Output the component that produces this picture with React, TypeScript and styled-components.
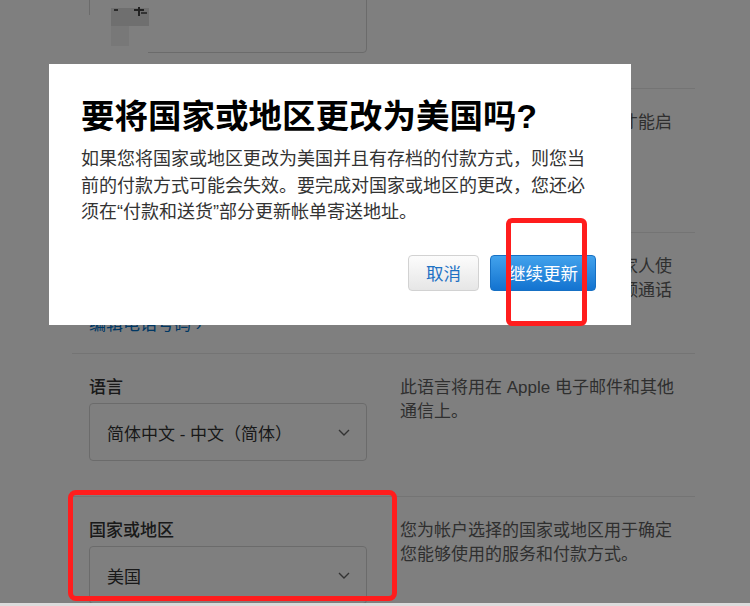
import React from 'react'
import styled, { createGlobalStyle } from 'styled-components'

const GlobalStyle = createGlobalStyle`
  html, body {
    margin: 0;
    padding: 0;
    background: #fff;
  }
  body {
    font-family: "Liberation Sans", "Noto Sans CJK SC", sans-serif;
  }
  * {
    box-sizing: border-box;
  }
`

const StyledScreen = styled.div`
  width: 750px;
  height: 606px;
  display: flex;
  flex-direction: column;
  overflow: hidden;
`

const StyledViewport = styled.div`
  position: relative;
  flex: 1;
  overflow: hidden;
  background: #fff;
`

const StyledBottomEdge = styled.div`
  height: 3px;
  background: #dcdcdc;
`

/* page is scrolled, first row starts above the top edge */
const StyledSettings = styled.div`
  width: 623px;
  margin: -55px 0 0 72px;
`

const StyledRow = styled.section<{ $height: number }>`
  position: relative;
  display: flex;
  gap: 33px;
  height: ${({ $height }) => $height}px;
  padding: 22px 0 0 17px;
  border-top: 1px solid #e8e8e8;

  &:first-child {
    border-top: 1px solid transparent;
  }
`

const StyledField = styled.div`
  flex: 0 0 278px;
  display: flex;
  flex-direction: column;
  gap: 4px;
`

const StyledLabel = styled.label`
  font-size: 17px;
  line-height: 24px;
  font-weight: 500;
  color: #333;
`

const StyledValue = styled.div`
  font-size: 17px;
  line-height: 24px;
  color: #333;
`

const StyledLink = styled.a`
  margin-top: 2px;
  font-size: 17px;
  line-height: 24px;
  color: #0070c9;
  text-decoration: none;
`

const StyledSelect = styled.div`
  position: relative;
  margin-top: -1px;
  height: 58px;
  display: flex;
  align-items: center;
  justify-content: space-between;
  padding: 0 16px 0 17px;
  border: 1px solid #d6d6d6;
  border-radius: 4px;
  background: #fff;
  font-size: 17px;
  color: #333;
`

const StyledMosaic = styled.svg`
  position: absolute;
  left: -2px;
  top: 11px;
`

const StyledDescription = styled.p`
  flex: 0 0 285px;
  margin: 0;
  font-size: 17px;
  line-height: 24px;
  color: #5e5e5e;
`

const StyledOverlay = styled.div`
  position: absolute;
  inset: 0;
  background: rgba(0, 0, 0, 0.5);
`

const StyledDialog = styled.div`
  position: absolute;
  left: 49px;
  top: 64px;
  width: 582px;
  height: 261px;
  display: flex;
  flex-direction: column;
  padding: 31px 35px 0 32px;
  background: #fff;
`

const StyledTitle = styled.h1`
  margin: 0;
  font-size: 33.5px;
  line-height: 43px;
  font-weight: 700;
  color: #000;
  white-space: nowrap;
`

const StyledMessage = styled.p`
  width: 510px;
  margin: 8px 0 0;
  font-size: 18px;
  line-height: 26.5px;
  color: #333;
`

const StyledActions = styled.div`
  display: flex;
  justify-content: flex-end;
  gap: 11px;
  margin-top: 29px;
`

const StyledButton = styled.button<{ $primary?: boolean }>`
  height: 36px;
  padding: 0 17px;
  border-radius: 4px;
  font-family: inherit;
  font-size: 17.5px;
  cursor: pointer;
  border: 1px solid ${({ $primary }) => ($primary ? '#1670c4' : '#d2d2d2')};
  color: ${({ $primary }) => ($primary ? '#fff' : '#1f72c4')};
  background: ${({ $primary }) =>
    $primary ? 'linear-gradient(#42a2ec, #1373d0)' : 'linear-gradient(#fcfcfc, #e6e6e6)'};
`

const StyledMark = styled.div<{ $left: number; $top: number; $width: number; $height: number; $radius: number }>`
  position: absolute;
  left: ${({ $left }) => $left}px;
  top: ${({ $top }) => $top}px;
  width: ${({ $width }) => $width}px;
  height: ${({ $height }) => $height}px;
  border: 5px solid #ff1d1d;
  border-radius: ${({ $radius }) => $radius}px;
  pointer-events: none;
`

function Chevron() {
  return (
    <svg width="12" height="7" viewBox="0 0 12 7">
      <polyline points="1,1 6,6 11,1" fill="none" stroke="#666" strokeWidth="1.4" />
    </svg>
  )
}

// redacted name value
function Mosaic() {
  return (
    <StyledMosaic width="64" height="48" viewBox="0 0 64 48">
      <rect x="0" y="8" width="60" height="40" fill="#fff" />
      <rect x="23" y="1" width="38" height="18" fill="#dedede" />
      <rect x="23" y="19" width="18" height="20" fill="#f0f0f0" />
      <rect x="26" y="2" width="4" height="2" fill="#555" />
      <rect x="46" y="2" width="10" height="2" fill="#444" />
      <rect x="50" y="0" width="2" height="9" fill="#444" />
      <rect x="53" y="5" width="6" height="2" fill="#666" />
    </StyledMosaic>
  )
}

export default function App() {
  return (
    <StyledScreen>
      <GlobalStyle />
      <StyledViewport>
        <StyledSettings>
          <StyledRow $height={143}>
            <StyledField>
              <StyledLabel>姓名</StyledLabel>
              <StyledSelect>
                <Mosaic />
              </StyledSelect>
            </StyledField>
            <StyledDescription>您的 Apple ID 名字。</StyledDescription>
          </StyledRow>
          <StyledRow $height={144}>
            <StyledField>
              <StyledLabel>安全性</StyledLabel>
              <StyledSelect>
                <span>双重认证</span>
                <Chevron />
              </StyledSelect>
            </StyledField>
            <StyledDescription>您的帐户必须开启双重认证后才能启用此功能。</StyledDescription>
          </StyledRow>
          <StyledRow $height={121}>
            <StyledField>
              <StyledLabel>电话号码</StyledLabel>
              <StyledValue>+86 138 0000 0000</StyledValue>
              <StyledLink href="#">编辑电话号码 ›</StyledLink>
            </StyledField>
            <StyledDescription>开启后，您的电话号码可以供家人使用，也可用于接听来自家人视频通话</StyledDescription>
          </StyledRow>
          <StyledRow $height={143}>
            <StyledField>
              <StyledLabel>语言</StyledLabel>
              <StyledSelect>
                <span>简体中文 - 中文（简体）</span>
                <Chevron />
              </StyledSelect>
            </StyledField>
            <StyledDescription>此语言将用在 Apple 电子邮件和其他通信上。</StyledDescription>
          </StyledRow>
          <StyledRow $height={143}>
            <StyledField>
              <StyledLabel>国家或地区</StyledLabel>
              <StyledSelect>
                <span>美国</span>
                <Chevron />
              </StyledSelect>
            </StyledField>
            <StyledDescription>您为帐户选择的国家或地区用于确定您能够使用的服务和付款方式。</StyledDescription>
          </StyledRow>
        </StyledSettings>

        <StyledOverlay />

        <StyledDialog role="dialog">
          <StyledTitle>要将国家或地区更改为美国吗?</StyledTitle>
          <StyledMessage>
            如果您将国家或地区更改为美国并且有存档的付款方式，则您当前的付款方式可能会失效。要完成对国家或地区的更改，您还必须在“付款和送货”部分更新帐单寄送地址。
          </StyledMessage>
          <StyledActions>
            <StyledButton>取消</StyledButton>
            <StyledButton $primary>继续更新</StyledButton>
          </StyledActions>
        </StyledDialog>

        <StyledMark $left={506} $top={218} $width={81} $height={108} $radius={6} />
        <StyledMark $left={68} $top={490} $width={329} $height={111} $radius={8} />
      </StyledViewport>
      <StyledBottomEdge />
    </StyledScreen>
  )
}
